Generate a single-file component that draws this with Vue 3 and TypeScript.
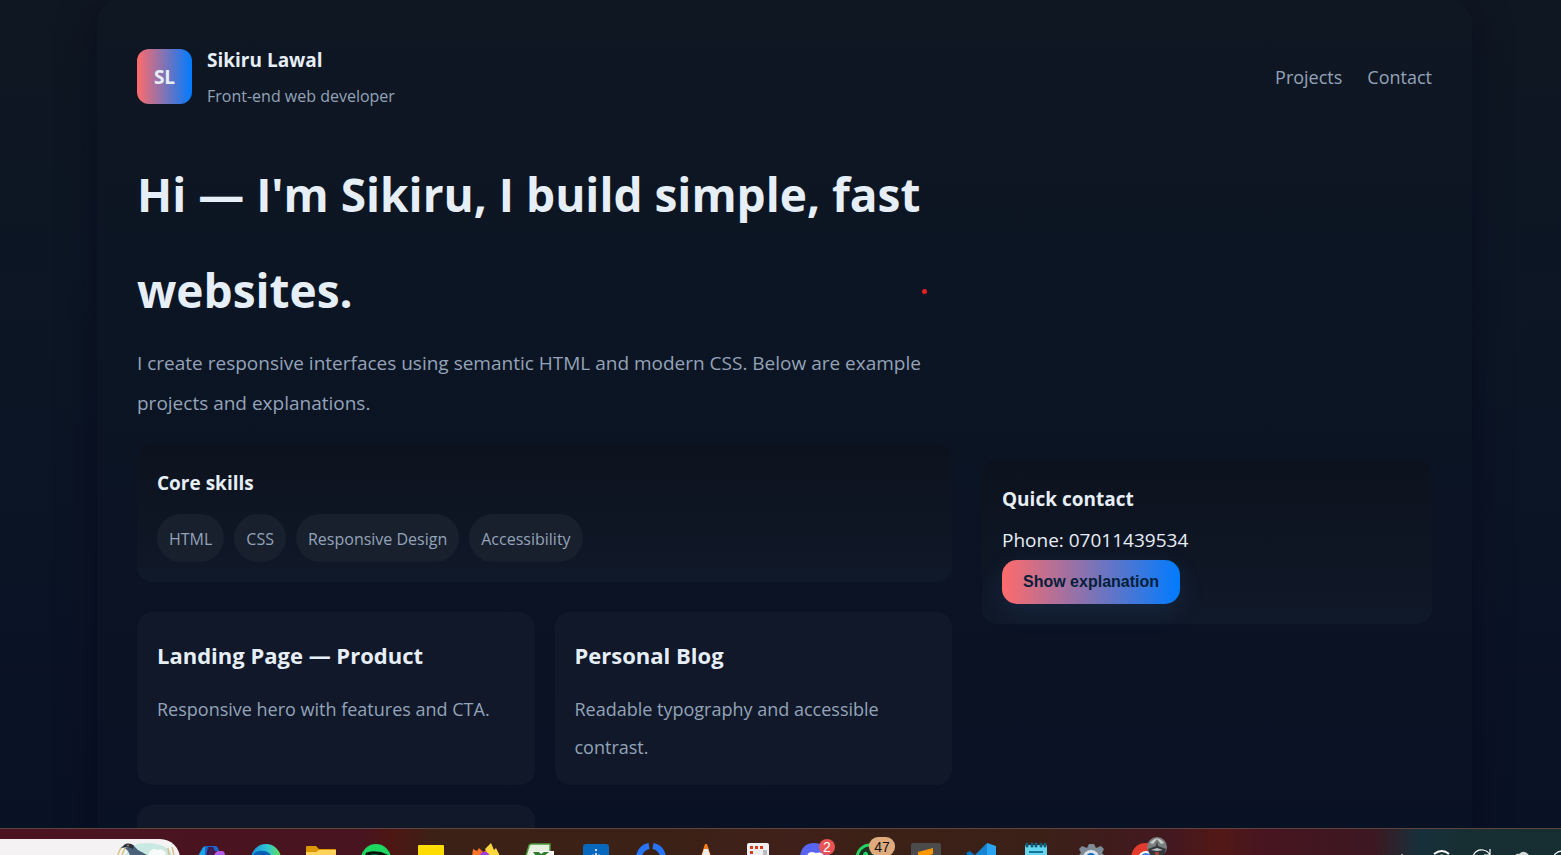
<script setup lang="ts">
import { ref } from 'vue'

interface Project {
  title: string
  text: string
}

const skills: string[] = ['HTML', 'CSS', 'Responsive Design', 'Accessibility']
const projects: Project[] = [
  { title: 'Landing Page — Product', text: 'Responsive hero with features and CTA.' },
  { title: 'Personal Blog', text: 'Readable typography and accessible contrast.' },
  { title: '', text: '' },
]
const pressed = ref(false)
</script>

<template>
  <div class="page">
    <div class="container">
      <header class="top">
        <div class="brand">
          <div class="logo">SL</div>
          <div class="who">
            <strong>Sikiru Lawal</strong>
            <span>Front-end web developer</span>
          </div>
        </div>
        <nav class="nav">
          <a href="#projects">Projects</a>
          <a href="#contact">Contact</a>
        </nav>
      </header>

      <div class="hero">
        <main class="main">
          <h1>Hi — I'm Sikiru, I build simple, fast websites.</h1>
          <p class="lead">
            I create responsive interfaces using semantic HTML and modern CSS. Below are example projects and
            explanations.
          </p>
          <section class="panel">
            <h2>Core skills</h2>
            <ul class="skills">
              <li v-for="s in skills" :key="s">{{ s }}</li>
            </ul>
          </section>
          <section id="projects" class="projects">
            <article v-for="(p, i) in projects" :key="i" class="card">
              <h3>{{ p.title }}</h3>
              <p>{{ p.text }}</p>
            </article>
          </section>
        </main>
        <aside id="contact" class="panel">
          <h2>Quick contact</h2>
          <p>Phone: 07011439534</p>
          <button type="button" class="cta" :aria-pressed="pressed" @click="pressed = !pressed">Show explanation</button>
        </aside>
      </div>
    </div>

    <span class="pointer"></span>

    <footer class="taskbar">
      <div class="search">
        <svg width="64" height="16" viewBox="0 0 64 16">
          <path d="M10 16C12 7 20 4 31 4s23 4 25 12z" fill="#c9e9e2" />
          <path d="M2 16q1-5 4-8M6 16l3-7M58 16l-2-8M53 16l-1-7" stroke="#d8c084" stroke-width="1.5" fill="none" />
          <path d="M32 16c2-6 6-7 10-5 3-2 8 1 8 5z" fill="#f7fbfb" />
          <path d="M9 9l8-3 5 5 9 5H14l-2-4z" fill="#4a6177" />
          <path d="M5 9l3-3c3-2 7-2 10 1l-1 3-5-2z" fill="#263241" />
          <circle cx="12" cy="6.5" r="1" fill="#e7772f" />
        </svg>
      </div>
      <div class="apps">
        <svg viewBox="0 0 55 27">
          <path d="M14 27l4-7q1-3 5-3h9l-5 2-4 8z" fill="#1ba4e8" />
          <path d="M21 17h10q3 0 4 5h-7l-1 5h-6z" fill="#1767d1" />
          <path d="M24 18l-2 9h8l1-5-2-4z" fill="#421b50" />
          <path d="M30 27q1-5 5-5h3q3 0 3 5z" fill="#b25ce8" />
        </svg>
        <svg viewBox="0 0 55 27">
          <defs>
            <linearGradient id="edge" x1="0" x2="1"><stop offset="0" stop-color="#1b8fe0" /><stop offset=".55" stop-color="#30c5d5" /><stop offset="1" stop-color="#64df4d" /></linearGradient>
          </defs>
          <circle cx="27" cy="30" r="15" fill="url(#edge)" />
          <path d="M13 27q4-6 12-5 6 1 7 5z" fill="#0b63b8" />
          <path d="M20 27q3-3 7-1v1z" fill="#103f82" />
        </svg>
        <svg viewBox="0 0 55 27">
          <path d="M12 18q0-1 1-1h9l3 3h16q1 0 1 1v4H12z" fill="#dd9700" />
          <path d="M12 23h10l3-2h17v6H12z" fill="#ffd35c" />
        </svg>
        <svg viewBox="0 0 55 27">
          <circle cx="27" cy="30" r="15" fill="#1ed760" />
          <path d="M18 25q10-3 20 2" stroke="#07120b" stroke-width="3" fill="none" stroke-linecap="round" />
        </svg>
        <svg viewBox="0 0 55 27"><rect x="14" y="16" width="26" height="14" rx="1" fill="#ffdc00" /></svg>
        <svg viewBox="0 0 55 27">
          <path d="M13 27l1-7 4 2 2-3 4 4 8-4 8 8z" fill="#ff7426" />
          <path d="M26 20l6-6 3 7 2-2 4 8H30z" fill="#ffd83e" />
          <path d="M21 25q4-4 8-1l2 3H22z" fill="#9b3ce0" />
        </svg>
        <svg viewBox="0 0 55 27">
          <path d="M12 27l3-10q0-2 3-2h18v12z" fill="#e5f0df" stroke="#4f9b3c" stroke-width="1.5" />
          <path d="M17 27v-5h23v5z" fill="#f8fcf4" />
          <path d="M19 23h6l2 2 3-2h5l-5 4h-8z" fill="#2b7c2f" />
        </svg>
        <svg viewBox="0 0 55 27">
          <rect x="14" y="15" width="26" height="18" rx="3" fill="#0868bd" />
          <circle cx="27" cy="21" r="1" fill="#fff" /><circle cx="27" cy="25" r="1" fill="#fff" />
          <path d="M24 27v-2M30 27v-2" stroke="#8fc8f7" />
        </svg>
        <svg viewBox="0 0 55 27">
          <path d="M15 29A12 12 0 0 1 25 17M29 17A12 12 0 0 1 39 29" stroke="#2775fb" stroke-width="6" fill="none" />
        </svg>
        <svg viewBox="0 0 55 27">
          <path d="M26 15h2l4 12H22z" fill="#f47c12" />
          <path d="M25 20h4l2 6H23z" fill="#eee" />
        </svg>
        <svg viewBox="0 0 55 27">
          <rect x="13" y="14" width="22" height="16" rx="2" fill="#eef0f2" />
          <path d="M29 21h4v6h-4z" fill="#b9bcc0" />
          <path d="M16 18.5h14M17.5 22v5" stroke="#d83b16" stroke-width="3" stroke-dasharray="3 2" />
        </svg>
        <svg viewBox="0 0 55 27">
          <path d="M11 27q2-13 14-13t15 13z" fill="#5865f2" />
          <path d="M18 27q1-4 5-4l4 1q7-2 8 3z" fill="#fff" />
          <circle cx="38" cy="18" r="8" fill="#e85455" />
          <text x="38" y="23" class="badge light">2</text>
        </svg>
        <svg viewBox="0 0 55 27">
          <circle cx="26" cy="29" r="13" fill="#19331f" stroke="#25d366" stroke-width="3" />
          <path d="M19 27q0-5 4-4l2 4z" fill="#25d366" />
          <rect x="25" y="8" width="26" height="19" rx="9" fill="#deaa7e" />
          <text x="38" y="23" class="badge">47</text>
        </svg>
        <svg viewBox="0 0 55 27">
          <rect x="12" y="14" width="30" height="18" rx="2" fill="#4b4b4b" />
          <path d="M19 23l15-4v6l-6 2h-9z" fill="#ff9800" />
        </svg>
        <svg viewBox="0 0 55 27">
          <path d="M12 24l4-2 6 5h-8z" fill="#0873bd" />
          <path d="M20 27l13-13v13z" fill="#1684d1" />
          <path d="M33 14l9 3v10h-9z" fill="#2ba5f2" />
        </svg>
        <svg viewBox="0 0 55 27">
          <rect x="16" y="16" width="22" height="14" rx="1" fill="#67d6ef" />
          <path d="M18 15v2M23 15v2M27 15v2M32 15v2M36 15v2" stroke="#135d7b" stroke-width="3" stroke-linecap="round" />
          <path d="M20 23h14" stroke="#14779b" stroke-width="2" />
        </svg>
        <svg viewBox="0 0 55 27">
          <path d="M14 27l3-3-2-4 3-3 5 2 2-4h5l2 4 5-2 3 3-2 4 3 3z" fill="#7e8c98" />
          <circle cx="27" cy="29" r="8" fill="#d8e1e7" /><circle cx="27" cy="29" r="5" fill="#1769b8" />
        </svg>
        <svg viewBox="0 0 55 27">
          <path d="M12 27q3-13 15-13t15 13z" fill="#e33b2e" />
          <circle cx="27" cy="30" r="8" fill="#fff" /><circle cx="27" cy="30" r="6" fill="#397de8" />
          <circle cx="38" cy="18" r="10" fill="#7c7f80" />
          <path d="M31 14q7-9 14 0l-3 1-4-5-4 5z" fill="#c9cdca" />
          <path d="M29 20l8-3 1-5 1 5 8 3-2 6H31z" fill="#34383c" />
          <path d="M32 21l6-2 6 2-6 1z" fill="#b8bec2" />
          <path d="M36 23h4v4h-4z" fill="#a5423d" />
        </svg>
      </div>
      <div class="tray">
        <svg viewBox="0 0 40 27"><path d="M19 27l2-2 2 2z" fill="#fff" /></svg>
        <svg viewBox="0 0 40 27"><path d="M13 25q8-6 15 0M17 28q4-3 7 0" stroke="#fff" stroke-width="2" fill="none" /></svg>
        <svg viewBox="0 0 40 27"><path d="M12 27q3-7 10-6 5 1 7 5M29 20v6h-6" stroke="#fff" stroke-width="1.2" fill="none" /></svg>
        <svg viewBox="0 0 40 27"><path d="M13 28q2-4 5-3 5-5 10 1l1 2z" fill="#d8d8d8" /></svg>
        <svg viewBox="0 0 40 27"><circle cx="21" cy="31" r="9" stroke="#fff" stroke-width="1.2" fill="none" /></svg>
      </div>
    </footer>
  </div>
</template>

<style>
html,
body {
  margin: 0;
  height: 100%;
  overflow: hidden;
  background: #081023;
}
</style>

<style scoped>
* {
  box-sizing: border-box;
}
.page {
  min-height: 100vh;
  padding: 0 89px 0 97px;
  background: linear-gradient(180deg, #0f1722 0, #0c1624 300px, #091125 855px);
  color: #e6eef8;
  font-family: 'Segoe UI', 'Open Sans', 'Noto Sans', sans-serif;
  font-size: 19px;
  line-height: 40px;
}
.container {
  padding: 40px;
  border-radius: 24px;
  background: linear-gradient(180deg, #0f1723 0, #0c1523 300px, #091124 855px);
  box-shadow: 0 10px 40px rgba(2, 6, 23, 0.4);
}
.top {
  display: flex;
  align-items: center;
  justify-content: space-between;
  margin-bottom: 33px;
}
.brand {
  display: flex;
  align-items: center;
  gap: 15px;
}
.logo {
  display: grid;
  place-items: center;
  width: 55px;
  height: 55px;
  border-radius: 12px;
  background: linear-gradient(90deg, #ff6b6b, #007bff);
  font-weight: 700;
}
.who {
  display: flex;
  flex-direction: column;
}
.who span {
  color: #94a3b8;
  font-size: 16px;
  line-height: 33px;
}
.nav {
  display: flex;
  gap: 25px;
}
.nav a {
  color: #94a3b8;
  font-size: 18px;
  text-decoration: none;
}
.hero {
  display: grid;
  grid-template-columns: minmax(0, 1fr) 450px;
  gap: 30px;
  align-items: center;
}
.main {
  min-width: 0;
}
h1,
h2,
h3,
p {
  margin: 0;
}
h1 {
  font-size: 46px;
  line-height: 96px;
}
.lead {
  margin: 5px 0 21px;
  color: #94a3b8;
}
.panel {
  padding: 20px;
  border-radius: 15px;
  background: linear-gradient(180deg, #0c121d, #101929);
}
.panel h2 {
  margin-bottom: 2px;
  font-size: 19px;
  line-height: 38px;
}
.panel .skills {
  display: flex;
  flex-wrap: wrap;
  gap: 10px;
  margin: 12px 0 0;
  padding: 0;
  list-style: none;
}
.skills li {
  padding: 8px 12px 6px;
  border-radius: 24px;
  background: #181f2d;
  color: #94a3b8;
  font-size: 16px;
  line-height: 34px;
}
.projects {
  display: grid;
  grid-template-columns: 1fr 1fr;
  gap: 20px;
  margin-top: 30px;
}
.card {
  min-height: 133px;
  padding: 20px 20px 19px;
  border-radius: 15px;
  background: #101829;
}
.card h3 {
  margin-bottom: 12px;
  font-size: 22px;
  line-height: 46px;
}
.card p {
  color: #94a3b8;
  font-size: 18px;
  line-height: 38px;
}
.cta {
  display: block;
  padding: 12px 21px;
  border: 0;
  border-radius: 15px;
  background: linear-gradient(90deg, #ff6b6b, #007bff);
  box-shadow: 0 8px 24px rgba(60, 110, 180, 0.16);
  color: #04203a;
  font: 700 16px/20px 'Liberation Sans', Arial, sans-serif;
}
.pointer {
  position: absolute;
  left: 922px;
  top: 289px;
  width: 5px;
  height: 5px;
  border-radius: 50%;
  background: #e82020;
}
.taskbar {
  position: fixed;
  right: 0;
  bottom: 0;
  left: 0;
  display: flex;
  height: 27px;
  overflow: hidden;
  border-top: 1px solid #5d443f;
  background: linear-gradient(90deg, #4b1420 0, #481420 23%, #4e1613 25%, #3b2116 28%, #3b2116 42%, #40201a 51%, #3b2116 56%, #3b2018 67%, #431820 75%, #521815 78%, #471520 81%, #3c1822 88%, #16303a 91%, #172e32 94%, #172e32 100%);
}
.search {
  flex: none;
  width: 180px;
  height: 40px;
  margin-top: 10px;
  padding-left: 116px;
  border-radius: 0 20px 20px 0;
  background: #f4f2f3;
  line-height: 0;
}
.apps {
  display: flex;
  margin-left: 4px;
}
.apps svg {
  flex: none;
  width: 55px;
  height: 27px;
}
.tray {
  display: flex;
  flex: none;
  margin-right: -20px;
  margin-left: auto;
}
.tray svg {
  width: 40px;
  height: 27px;
}
.badge {
  fill: #111;
  font-family: 'Liberation Sans', Arial, sans-serif;
  font-size: 14px;
  text-anchor: middle;
}
.badge.light {
  fill: #fff;
}
</style>
